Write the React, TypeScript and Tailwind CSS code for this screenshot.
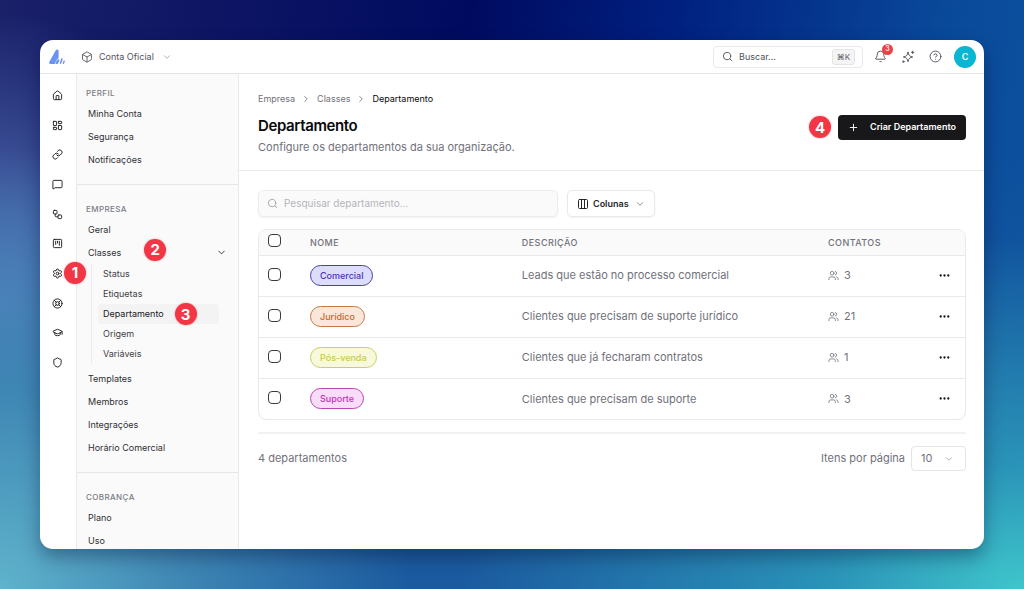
import React from 'react';
import {
  Bell,
  Box,
  ChevronDown,
  ChevronRight,
  CircleHelp,
  Columns3,
  Ellipsis,
  GraduationCap,
  House,
  LayoutDashboard,
  LifeBuoy,
  Link,
  MessageSquare,
  Plus,
  Search,
  Settings,
  Shield,
  SquareKanban,
  Users,
  Workflow,
} from 'lucide-react';

interface Department {
  id: number;
  name: string;
  description: string;
  contacts: number;
  badge: string;
}

interface NavSection {
  title: string;
  items: string[];
}

const departments: Department[] = [
  {
    id: 1,
    name: 'Comercial',
    description: 'Leads que estão no processo comercial',
    contacts: 3,
    badge: 'border-[#4a3fa8] bg-[#dedcfb] text-[#4a35b5]',
  },
  {
    id: 2,
    name: 'Jurídico',
    description: 'Clientes que precisam de suporte jurídico',
    contacts: 21,
    badge: 'border-[#c47a48] bg-[#fae7da] text-[#c8662a]',
  },
  {
    id: 3,
    name: 'Pós-venda',
    description: 'Clientes que já fecharam contratos',
    contacts: 1,
    badge: 'border-[#c9d160] bg-[#f7f8dc] text-[#c6cc4a]',
  },
  {
    id: 4,
    name: 'Suporte',
    description: 'Clientes que precisam de suporte',
    contacts: 3,
    badge: 'border-[#b848b0] bg-[#f9dcf7] text-[#c035b8]',
  },
];

const sections: NavSection[] = [
  { title: 'Perfil', items: ['Minha Conta', 'Segurança', 'Notificações'] },
  {
    title: 'Empresa',
    items: ['Geral', 'Classes', 'Templates', 'Membros', 'Integrações', 'Horário Comercial'],
  },
  { title: 'Cobrança', items: ['Plano', 'Uso'] },
];

const classItems = ['Status', 'Etiquetas', 'Departamento', 'Origem', 'Variáveis'];

const railItems = [
  { label: 'Início', icon: House },
  { label: 'Painel', icon: LayoutDashboard },
  { label: 'Links', icon: Link },
  { label: 'Conversas', icon: MessageSquare },
  { label: 'Fluxos', icon: Workflow },
  { label: 'Kanban', icon: SquareKanban },
  { label: 'Configurações', icon: Settings },
  { label: 'Suporte', icon: LifeBuoy },
  { label: 'Academia', icon: GraduationCap },
  { label: 'Segurança', icon: Shield },
];

const Step = ({ n, className = '' }: { n: number; className?: string }) => (
  <span
    className={`flex size-[22px] shrink-0 items-center justify-center rounded-full bg-[#f23645] text-[15px] leading-none font-bold text-white shadow-[0_0_2px_rgba(242,54,69,0.5)] ${className}`}
  >
    {n}
  </span>
);

const Logo = () => (
  <svg viewBox="0 0 16 16" className="size-4" fill="#6b93f2" aria-hidden="true">
    <path d="M6.800 1.300C7.500 0 9.600.4 9.600 2v6.400c0 .6-.2 1-.7 1.300-1.500 1.200-2.400 2.700-2.700 4.500-.1.500-.4.800-.9.800H1.500C.3 15-.2 14 .3 13.100z" />
    <path d="M9.400 10.300c.7-.2 1.200.4 1 1L9.200 14.300c-.2.500-.5.700-1 .7h-.9c-.5 0-.8-.4-.7-.9.300-1.700 1.300-3.100 2.800-3.800z" />
    <path d="M12.200 9.800c.4-.8 1.700-.4 1.400.6l-1.500 4.100c-.3.800-1.600.5-1.400-.4z" />
    <path d="M14.500 11.900c.4-.7 1.500-.3 1.300.5l-.8 2.200c-.3.700-1.500.4-1.300-.4z" />
  </svg>
);

const Sparkles = () => (
  <svg
    viewBox="0 0 24 24"
    className="size-[14px]"
    fill="none"
    stroke="currentColor"
    strokeWidth="1.7"
    strokeLinecap="round"
    strokeLinejoin="round"
    aria-hidden="true"
  >
    <path d="M12 4c.9 5.200 2.800 7.100 8 8-5.200.9-7.100 2.800-8 8-.9-5.200-2.800-7.100-8-8 5.200-.9 7.100-2.800 8-8z" />
    <path d="M20 2v4M18 4h4" />
    <circle cx="4" cy="20" r="1.300" />
  </svg>
);

const TopBar = () => (
  <header className="flex h-[34px] shrink-0 items-center border-b border-[#e4e4e7] pr-2 pl-[9px]">
    <a href="#" aria-label="Página inicial">
      <Logo />
    </a>
    <button className="ml-4 flex items-center text-[9px] text-[#52525b]">
      <Box className="size-3" strokeWidth={1.75} />
      <span className="ml-[6px]">Conta Oficial</span>
      <ChevronDown className="ml-2 size-[10px] text-[#a1a1aa]" />
    </button>
    <label className="ml-auto flex h-[22px] w-[150px] items-center rounded-[4px] border border-[#e9e9ec] pr-[7px] pl-2">
      <Search className="size-[11px] text-[#52525b]" />
      <input
        type="text"
        aria-label="Buscar"
        placeholder="Buscar..."
        className="ml-[6px] w-0 flex-1 text-[9px] outline-none placeholder:text-[#52525b]"
      />
      <kbd className="flex h-4 w-[23px] items-center justify-center rounded-[3px] border border-[#e4e4e7] bg-[#f4f4f5] font-[Inter,sans-serif] text-[8px] font-medium text-[#71717a]">
        ⌘K
      </kbd>
    </label>
    <button aria-label="Notificações" className="relative ml-[11px] text-[#52525b]">
      <Bell className="size-[13px]" strokeWidth={1.75} />
      <span className="absolute -top-[6px] -right-[6px] flex size-[11px] items-center justify-center rounded-full bg-[#ef4048] text-[7px] font-medium text-white">
        3
      </span>
    </button>
    <button aria-label="Assistente" className="ml-[14px] text-[#52525b]">
      <Sparkles />
    </button>
    <button aria-label="Ajuda" className="ml-[14px] text-[#52525b]">
      <CircleHelp className="size-[13px]" strokeWidth={1.75} />
    </button>
    <button className="ml-3 flex size-[22px] items-center justify-center rounded-full bg-[#09b6d2] text-[9px] font-semibold text-white">
      C
    </button>
  </header>
);

const Rail = () => (
  <nav aria-label="Principal" className="w-[37px] shrink-0 border-r border-[#e9e9ec] pt-4 pr-px">
    <ul className="flex h-[278px] flex-col items-center justify-between">
      {railItems.map(({ label, icon: Icon }) => (
        <li key={label} className="relative">
          <a href="#" aria-label={label} className="block text-[#18181b]">
            <Icon className="size-[11px]" />
          </a>
          {label === 'Configurações' && <Step n={1} className="absolute -top-[6px] left-3 z-10" />}
        </li>
      ))}
    </ul>
  </nav>
);

const ClassesMenu = () => (
  <ul className="mr-2 mb-[3px] ml-[3px] border-l border-[#ececee] pl-[6px]">
    {classItems.map((item) => {
      const active = item === 'Departamento';
      return (
        <li key={item}>
          <a
            href="#"
            className={`flex h-5 items-center gap-[11px] rounded-[4px] px-[5px] text-[9px] ${
              active ? 'bg-[#f3f3f4] text-[#18181b]' : 'text-[#3f3f46]'
            }`}
          >
            {item}
            {active && <Step n={3} />}
          </a>
        </li>
      );
    })}
  </ul>
);

const Sidebar = () => (
  <aside className="w-[162px] shrink-0 overflow-hidden border-r border-[#e9e9ec] bg-[#fafafa]">
    {sections.map((section) => (
      <section
        key={section.title}
        className="border-b border-[#e6e6e9] pt-[18px] pr-[11px] pb-[13px] pl-[9px] first:pt-[13px]"
      >
        <h2 className="mb-[3px] text-[8px] leading-3 font-medium tracking-wider text-[#7c7c85] uppercase">
          {section.title}
        </h2>
        <ul>
          {section.items.map((item) => (
            <li key={item} className="pl-[2px]">
              <a href="#" className="flex h-[23px] items-center text-[9px] text-[#303035]">
                {item}
                {item === 'Classes' && (
                  <>
                    <Step n={2} className="mb-[6px] ml-[23px]" />
                    <ChevronDown className="ml-auto size-[11px]" />
                  </>
                )}
              </a>
              {item === 'Classes' && <ClassesMenu />}
            </li>
          ))}
        </ul>
      </section>
    ))}
  </aside>
);

const PageHeader = () => (
  <div className="flex h-[97px] items-center justify-between border-b border-[#e9e9ec] pt-[2px] pr-[18px] pl-[19px]">
    <div>
      <nav aria-label="Trilha" className="flex items-center gap-[6px] text-[9px] leading-4 text-[#71717a]">
        <a href="#">Empresa</a>
        <ChevronRight className="size-[10px]" />
        <a href="#">Classes</a>
        <ChevronRight className="size-[10px]" />
        <span className="text-[#09090b]">Departamento</span>
      </nav>
      <h1 className="mt-[9px] text-[15px] leading-5 font-semibold tracking-tight text-[#09090b]">Departamento</h1>
      <p className="mt-[3px] text-[11px] leading-4 text-[#71717a]">Configure os departamentos da sua organização.</p>
    </div>
    <div className="mt-2 flex items-center gap-[7px]">
      <Step n={4} />
      <button className="flex h-[25px] items-center gap-[11px] rounded-[4px] bg-[#18181b] px-[10px] text-[9px] font-semibold text-white">
        <Plus className="size-[11px]" />
        Criar Departamento
      </button>
    </div>
  </div>
);

const Checkbox = ({ label }: { label: string }) => (
  <input
    type="checkbox"
    aria-label={label}
    className="mb-[3px] ml-[9px] block size-[13px] appearance-none rounded-[4px] border border-[#3a3a3d] bg-white"
  />
);

const DepartmentTable = () => (
  <div className="mt-3 overflow-hidden rounded-[8px] border border-[#e9e9ec]">
    <table className="w-full table-fixed text-left">
      <thead className="bg-[#fafafa]">
        <tr className="h-[25px] border-b border-[#e9e9ec] text-[9px] tracking-wider text-[#71717a]">
          <th className="w-[51px]">
            <Checkbox label="Selecionar todos" />
          </th>
          <th className="w-[30%] font-medium">NOME</th>
          <th className="font-medium">DESCRIÇÃO</th>
          <th className="w-[95px] font-medium">CONTATOS</th>
          <th className="w-[42px]" aria-label="Ações" />
        </tr>
      </thead>
      <tbody>
        {departments.map((department) => (
          <tr key={department.id} className="h-[41px] border-b border-[#e9e9ec] text-[11px] text-[#71717a] last:border-b-0">
            <td>
              <Checkbox label={`Selecionar ${department.name}`} />
            </td>
            <td>
              <span
                className={`inline-flex h-[21px] items-center rounded-full border px-[9px] align-middle text-[9px] font-medium ${department.badge}`}
              >
                {department.name}
              </span>
            </td>
            <td>{department.description}</td>
            <td>
              <span className="flex items-center gap-[5px]">
                <Users className="size-[11px]" strokeWidth={1.75} />
                {department.contacts}
              </span>
            </td>
            <td>
              <button aria-label={`Ações de ${department.name}`} className="ml-[15px] block text-[#18181b]">
                <Ellipsis className="size-[13px]" strokeWidth={2.25} />
              </button>
            </td>
          </tr>
        ))}
      </tbody>
    </table>
  </div>
);

const App: React.FC = () => {
  return (
    <div className="h-screen bg-[radial-gradient(ellipse_55%_60%_at_100%_100%,#3fc6cb_0%,#2a93b8_35%,transparent_100%),radial-gradient(ellipse_40%_75%_at_0%_100%,#5fb3cb_0%,#3e86b4_45%,transparent_100%),radial-gradient(ellipse_22%_50%_at_0%_52%,#5c7cc0_0%,transparent_100%),linear-gradient(to_top,#1b5a9f_0%,#1b5a9f_12%,transparent_75%),linear-gradient(100deg,#1a2169_0%,#0c1463_22%,#000b60_42%,#002080_60%,#0a4a9b_85%,#0d559f_100%)] p-10 font-[Inter,sans-serif]">
      <div className="flex h-full flex-col overflow-hidden rounded-[13px] bg-white shadow-[0_8px_18px_rgba(0,10,40,0.35)]">
        <TopBar />
        <div className="flex min-h-0 flex-1">
          <Rail />
          <Sidebar />
          <main className="min-w-0 flex-1">
            <PageHeader />
            <div className="pt-[19px] pr-[18px] pl-[19px]">
              <div className="flex items-center gap-[9px]">
                <label className="flex h-[27px] w-[300px] items-center rounded-[5px] border border-[#ececee] bg-[#fafafa] px-2 shadow-xs">
                  <Search className="size-[11px] text-[#a1a1aa]" />
                  <input
                    type="text"
                    aria-label="Pesquisar departamento"
                    placeholder="Pesquisar departamento..."
                    className="ml-[6px] w-0 flex-1 text-[10px] outline-none placeholder:text-[#b4b4bb]"
                  />
                </label>
                <button className="flex h-[27px] items-center rounded-[5px] border border-[#e9e9ec] px-[9px] text-[9px] font-semibold text-[#27272a] shadow-xs">
                  <Columns3 className="size-3" />
                  <span className="ml-1">Colunas</span>
                  <ChevronDown className="ml-[6px] size-[10px] text-[#71717a]" />
                </button>
              </div>
              <DepartmentTable />
              <footer className="mt-3 flex items-center border-t-2 border-[#f1f1f3] pt-3 text-[11px] text-[#71717a]">
                <p>4 departamentos</p>
                <label htmlFor="page-size" className="mr-[6px] ml-auto">
                  Itens por página
                </label>
                <div className="relative">
                  <select
                    id="page-size"
                    defaultValue="10"
                    className="h-[25px] w-[55px] appearance-none rounded-[4px] border border-[#e4e4e7] bg-white pl-[9px] text-[11px]"
                  >
                    <option>10</option>
                    <option>20</option>
                    <option>50</option>
                  </select>
                  <ChevronDown className="pointer-events-none absolute top-2 right-3 size-[10px] text-[#a1a1aa]" />
                </div>
              </footer>
            </div>
          </main>
        </div>
      </div>
    </div>
  );
};

export default App;
